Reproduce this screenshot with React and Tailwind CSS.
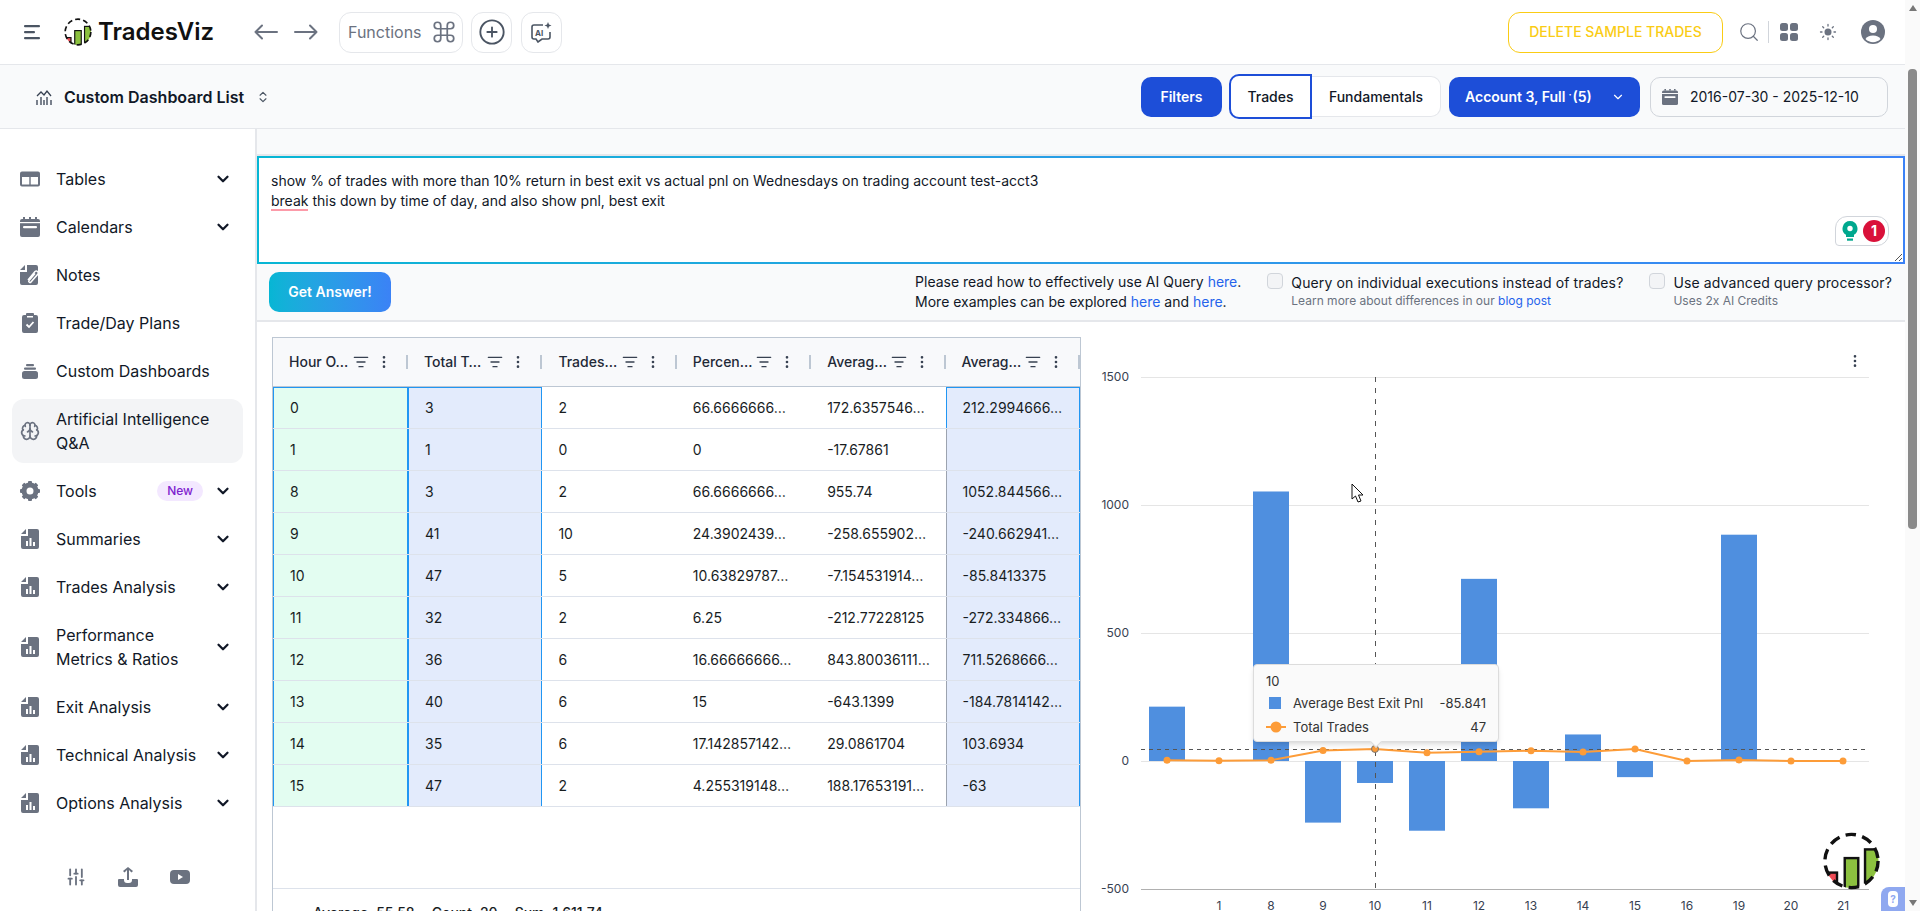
import { Brain, ChevronDown, ChevronsUpDown, CirclePlus, Command, EllipsisVertical, ListFilter, Search, SlidersVertical } from 'lucide-react';

const TableIcon = () => (
  <svg className="w-5 h-5" viewBox="0 0 20 20" fill="currentColor">
    <path d="M0 4.5A2 2 0 012 2.5h16a2 2 0 012 2v11a2 2 0 01-2 2H2a2 2 0 01-2-2z" />
    <rect x="2" y="8" width="7.3" height="7.5" fill="#fff" />
    <rect x="10.7" y="8" width="7.3" height="7.5" fill="#fff" />
  </svg>
);

const CalendarIcon = ({ className = 'w-5 h-5' }) => (
  <svg className={className} viewBox="0 0 20 20" fill="currentColor">
    <rect x="0" y="2" width="20" height="18" rx="2" />
    <rect x="3" y="0" width="2" height="2" />
    <rect x="9" y="0" width="2" height="2" />
    <rect x="15" y="0" width="2" height="2" />
    <rect x="0" y="5" width="20" height="1.2" fill="#fff" />
    <rect x="3" y="9" width="14" height="2.2" rx="1" fill="#fff" />
  </svg>
);

const NotesIcon = () => (
  <svg className="w-5 h-5" viewBox="0 0 20 20" fill="currentColor">
    <path d="M5 0v5H0zM7 0h9a2 2 0 012 2v16a2 2 0 01-2 2H2a2 2 0 01-2-2V7h7z" />
    <path d="M8 15l7-8.500a2 2 0 013 2.500l-7 8a1.200 1.200 0 01-2-1.500l6-7" fill="none" stroke="#fff" strokeWidth="1.5" />
  </svg>
);

const PlanIcon = () => (
  <svg className="w-5 h-5" viewBox="0 0 20 20" fill="currentColor">
    <path d="M4 2h2V1a1 1 0 011-1h6a1 1 0 011 1v1h2a2 2 0 012 2v14a2 2 0 01-2 2H4a2 2 0 01-2-2V4a2 2 0 012-2z" />
    <rect x="7" y="3" width="6" height="1.500" fill="#fff" />
    <path d="M6.500 11.500l2.500 2.500 4.500-5" fill="none" stroke="#fff" strokeWidth="1.800" />
  </svg>
);

const StackIcon = () => (
  <svg className="w-5 h-5" viewBox="0 0 20 20" fill="currentColor">
    <rect x="2" y="10" width="16" height="8" rx="2.500" />
    <rect x="4" y="6.500" width="12" height="2.200" rx="1" />
    <rect x="6" y="3" width="8" height="2.200" rx="1" />
  </svg>
);

const GearIcon = () => (
  <svg className="w-5 h-5" viewBox="0 0 20 20" fill="currentColor">
    {[0, 45, 90, 135, 180, 225, 270, 315].map((deg) => (
      <rect key={deg} x="8" y="0" width="4" height="4" rx="1" transform={`rotate(${deg} 10 10)`} />
    ))}
    <circle cx="10" cy="10" r="6" fill="none" stroke="currentColor" strokeWidth="5" />
  </svg>
);

const FileChartIcon = () => (
  <svg className="w-5 h-5" viewBox="0 0 20 20" fill="currentColor">
    <path d="M6 0v5H1zM8 0h9a2 2 0 012 2v16a2 2 0 01-2 2H3a2 2 0 01-2-2V7h7z" />
    <rect x="6" y="12" width="2" height="5" fill="#fff" />
    <rect x="9.500" y="9" width="2" height="8" fill="#fff" />
    <rect x="13" y="13" width="2" height="4" fill="#fff" />
  </svg>
);

const navItems = [
  { label: 'Tables', icon: <TableIcon />, arrow: true },
  { label: 'Calendars', icon: <CalendarIcon />, arrow: true },
  { label: 'Notes', icon: <NotesIcon /> },
  { label: 'Trade/Day Plans', icon: <PlanIcon /> },
  { label: 'Custom Dashboards', icon: <StackIcon /> },
  { label: 'Artificial Intelligence Q&A', icon: <Brain className="w-5 h-5" strokeWidth={2} />, active: true },
  { label: 'Tools', icon: <GearIcon />, arrow: true, badge: 'New' },
  { label: 'Summaries', icon: <FileChartIcon />, arrow: true },
  { label: 'Trades Analysis', icon: <FileChartIcon />, arrow: true },
  { label: 'Performance Metrics & Ratios', icon: <FileChartIcon />, arrow: true },
  { label: 'Exit Analysis', icon: <FileChartIcon />, arrow: true },
  { label: 'Technical Analysis', icon: <FileChartIcon />, arrow: true },
  { label: 'Options Analysis', icon: <FileChartIcon />, arrow: true },
];

const columns = ['Hour O…', 'Total T…', 'Trades…', 'Percen…', 'Averag…', 'Averag…'];

const rows = [
  ['0', '3', '2', '66.6666666…', '172.6357546…', '212.2994666…'],
  ['1', '1', '0', '0', '-17.67861', ''],
  ['8', '3', '2', '66.6666666…', '955.74', '1052.844566…'],
  ['9', '41', '10', '24.3902439…', '-258.655902…', '-240.662941…'],
  ['10', '47', '5', '10.63829787…', '-7.154531914…', '-85.8413375'],
  ['11', '32', '2', '6.25', '-212.77228125', '-272.334866…'],
  ['12', '36', '6', '16.66666666…', '843.80036111…', '711.5268666…'],
  ['13', '40', '6', '15', '-643.1399', '-184.7814142…'],
  ['14', '35', '6', '17.142857142…', '29.0861704', '103.6934'],
  ['15', '47', '2', '4.255319148…', '188.17653191…', '-63'],
];

const chartLabels = ['', '1', '8', '9', '10', '11', '12', '13', '14', '15', '16', '19', '20', '21'];
const bestExit = [212.3, 0, 1052.8, -240.66, -85.84, -272.33, 711.53, -184.78, 103.69, -63, 0, 884, 0, 0];
const totalTrades = [3, 1, 3, 41, 47, 32, 36, 40, 35, 47, 0, 4, 0, 0];

const xAt = (i) => 1167 + i * 52;
const yAt = (v) => 761 - v * 0.256;

function Logo({ id, className }) {
  return (
    <svg className={className} viewBox="0 0 60 60">
      <clipPath id={id}>
        <circle cx="30" cy="30" r="28" />
      </clipPath>
      <circle cx="30" cy="30" r="28" fill="#fff" />
      <g clipPath={`url(#${id})`} stroke="#111" strokeWidth="2.500">
        <rect x="4" y="42" width="11" height="20" fill="#ef4b55" />
        <rect x="23" y="27" width="14" height="35" fill="#8cc13f" />
        <rect x="44" y="18" width="16" height="34" fill="#8cc13f" />
      </g>
      <circle cx="30" cy="30" r="27.500" fill="none" stroke="#111" strokeWidth="3.500" strokeDasharray="11 6.500" />
    </svg>
  );
}

function NavItem({ item }) {
  return (
    <div className={`flex items-center rounded-xl pl-2 pr-[11px] text-base leading-6 text-[#111827] ${item.active ? 'bg-[#f3f4f6] py-2 my-1' : 'py-3'}`}>
      <span className="w-5 shrink-0 text-[#6b7280]">{item.icon}</span>
      <span className="ml-4 flex-1">{item.label}</span>
      {item.badge && (
        <span className="mr-[11px] rounded-full bg-[#f3e8ff] px-[10px] text-xs leading-5 font-medium text-[#7e22ce]">{item.badge}</span>
      )}
      {item.arrow && <ChevronDown className="w-[18px] h-[18px] text-[#111827] shrink-0" strokeWidth={3} />}
    </div>
  );
}

function HeaderCell({ title, first }) {
  return (
    <div className={`flex items-center h-full shrink-0 pl-4 ${first ? 'w-[135px]' : 'w-[134.4px]'}`}>
      <span className="w-[61px] whitespace-nowrap text-sm font-medium text-[#1f2937]">{title}</span>
      <ListFilter className="ml-[3px] w-4 h-4 text-[#374151] shrink-0" strokeWidth={2} />
      <EllipsisVertical className="ml-[7px] w-4 h-4 text-[#374151] shrink-0" strokeWidth={2} />
      <span className="ml-[14px] w-0.5 h-[14px] bg-[#bdc7d3] shrink-0" />
    </div>
  );
}

const cellStyles = [
  'w-[135px] bg-[#e3fdf1] border-x border-[#2196f3]',
  'w-[134.4px] bg-[#e3ebfc] border-x border-[#2196f3]',
  'w-[134.4px]',
  'w-[134.4px]',
  'w-[134.4px]',
  'w-[134.4px] bg-[#e3ebfc] border-r border-r-[#2196f3] border-l border-l-[#9ca3af]',
];

function DataTable() {
  return (
    <div className="flex flex-col shrink-0 w-[809px] h-[640px] border border-[#bdc7d3] overflow-hidden">
      <div className="flex items-center h-[49px] shrink-0 bg-[#f8f9fb] border-b border-[#bdc7d3]">
        {columns.map((c, i) => (
          <HeaderCell key={i} title={c} first={i === 0} />
        ))}
      </div>
      {rows.map((row, r) => (
        <div key={r} className="flex h-[42px] shrink-0 border-b border-[#dde2eb]">
          {row.map((val, c) => (
            <div
              key={c}
              className={`flex items-center shrink-0 pl-4 text-sm whitespace-nowrap text-[#181d1f] ${cellStyles[c]} ${r === 0 && (c < 2 || c === 5) ? 'border-t border-t-[#2196f3] border-l-[#2196f3]' : ''}`}
            >
              {val}
            </div>
          ))}
        </div>
      ))}
      <div className="h-[81px] shrink-0" />
      <div className="flex border-t border-[#dde2eb] pt-[14px] pl-10 gap-[17px] text-sm font-medium text-[#181d1f]">
        <span>Average: 55.58</span>
        <span>Count: 20</span>
        <span>Sum: 1,611.74</span>
      </div>
    </div>
  );
}

function Chart() {
  const linePoints = totalTrades.map((v, i) => `${xAt(i)},${yAt(v)}`).join(' ');
  return (
    <div className="relative flex-1 h-[589px]">
      <svg className="block" width="823" height="589" viewBox="1082 322 823 589">
        {[377, 505, 633, 761].map((y) => (
          <line key={y} x1="1141" x2="1869" y1={y + 0.5} y2={y + 0.5} stroke="#e5e5e5" />
        ))}
        <line x1="1141" x2="1869" y1="889.500" y2="889.500" stroke="#b0b0b0" />
        {[[1500, 377], [1000, 505], [500, 633], [0, 761], [-500, 889]].map(([v, y]) => (
          <text key={v} x="1129" y={y + 4} textAnchor="end" fontSize="12" fill="#374151">{v}</text>
        ))}
        {chartLabels.map((l, i) => (
          <text key={i} x={xAt(i)} y="910" textAnchor="middle" fontSize="12" fill="#374151">{l}</text>
        ))}
        {bestExit.map((v, i) =>
          v === 0 ? null : (
            <rect key={i} x={xAt(i) - 18} y={v > 0 ? yAt(v) : 761} width="36" height={Math.abs(v) * 0.256} fill="#4f8fdf" />
          )
        )}
        <line x1="1375.500" x2="1375.500" y1="377" y2="889" stroke="#555" strokeDasharray="5 6" />
        <line x1="1141" x2="1869" y1="749.500" y2="749.500" stroke="#555" strokeDasharray="4 4" />
        <polyline points={linePoints} fill="none" stroke="#fd9c38" strokeWidth="2" />
        {totalTrades.map((v, i) => (
          <circle key={i} cx={xAt(i)} cy={yAt(v)} r="3.500" fill="#fd9c38" stroke={i === 4 ? '#777' : 'none'} />
        ))}
      </svg>
      <EllipsisVertical className="absolute left-[765px] top-[31px] w-4 h-4 text-[#374151]" strokeWidth={2} />
      {/* mouse pointer caught in the screenshot */}
      <svg className="absolute left-[269px] top-[161px] w-[13px] h-[20px]" viewBox="0 0 13 20">
        <path d="M1 1v15l3.500-3 2.500 6 3-1-2.500-6H12z" fill="#fff" stroke="#111" strokeWidth="1" />
      </svg>
      {/* hover tooltip */}
      <div className="absolute left-[171px] top-[342px] w-[246px] h-[78px] rounded bg-[#fafafa] border border-[#dcdcdc] shadow-md px-3 py-[6px] text-[13px] leading-6 text-[#333]">
        <div className="leading-5">10</div>
        <div className="flex items-center">
          <span className="w-3 h-3 ml-[3px] bg-[#4f8fdf]" />
          <span className="ml-3 flex-1">Average Best Exit Pnl</span>
          <span>-85.841</span>
        </div>
        <div className="flex items-center">
          <svg className="w-5 h-3 shrink-0" viewBox="0 0 20 12">
            <line x1="0" x2="20" y1="6" y2="6" stroke="#fd9c38" strokeWidth="2" />
            <circle cx="10" cy="6" r="5.500" fill="#fd9c38" />
          </svg>
          <span className="ml-[7px] flex-1">Total Trades</span>
          <span>47</span>
        </div>
        <span className="absolute left-[118px] bottom-[-5px] w-2 h-2 rotate-45 bg-[#fafafa] border-r border-b border-[#dcdcdc]" />
      </div>
    </div>
  );
}

function TopBar() {
  return (
    <header className="flex items-center h-[65px] shrink-0 bg-white border-b border-[#e5e7eb] pl-6 pr-5">
      <svg className="w-4 h-4 text-[#4b5563]" viewBox="0 0 16 16" fill="currentColor">
        <rect x="0" y="1" width="16" height="2.200" rx="1" />
        <rect x="0" y="7" width="11" height="2.200" rx="1" />
        <rect x="0" y="13" width="16" height="2.200" rx="1" />
      </svg>
      <Logo id="logo-top" className="ml-6 w-[28px] h-[28px]" />
      <span className="ml-[6px] w-[116px] text-2xl font-semibold text-[#111]">TradesViz</span>
      <svg className="ml-10 w-6 h-4 text-[#6b7280]" viewBox="0 0 24 16" fill="none" stroke="currentColor" strokeWidth="2" strokeLinecap="round" strokeLinejoin="round">
        <path d="M23 8H1.500M8 1.500L1.500 8 8 14.500" />
      </svg>
      <svg className="ml-4 w-6 h-4 text-[#6b7280]" viewBox="0 0 24 16" fill="none" stroke="currentColor" strokeWidth="2" strokeLinecap="round" strokeLinejoin="round">
        <path d="M1 8h21.500M16 1.500L22.500 8 16 14.500" />
      </svg>
      <div className="ml-[21px] flex items-center h-[41px] w-[124px] rounded-xl border border-[#e5e7eb] pl-2 text-base text-[#6b7280]">
        Functions
        <Command className="ml-[9px] w-[26px] h-[26px]" strokeWidth={1.6} />
      </div>
      <div className="ml-2 flex items-center justify-center h-[41px] w-[41px] rounded-xl border border-[#e5e7eb] text-[#4b5563]">
        <CirclePlus className="w-7 h-7" strokeWidth={1.6} />
      </div>
      <div className="ml-[9px] flex items-center justify-center h-[41px] w-[41px] rounded-xl border border-[#e5e7eb] text-[#4b5563]">
        <svg className="w-6 h-[22px]" viewBox="2 0 22 22" fill="none" stroke="currentColor" strokeWidth="1.600">
          <path d="M14 4H5a2 2 0 00-2 2v10a2 2 0 002 2h2l2 3 4-3h6a2 2 0 002-2v-5" />
          <path d="M19 1l1 2.500 2.500 1-2.500 1-1 2.500-1-2.500-2.500-1 2.500-1z" fill="currentColor" stroke="none" />
          <text x="6" y="14.500" fontSize="8" fontWeight="700" fill="currentColor" stroke="none">AI</text>
        </svg>
      </div>
      <div className="ml-auto flex items-center justify-center w-[215px] h-[41px] rounded-xl border border-[#facc15] text-sm font-medium text-[#facc15]">
        DELETE SAMPLE TRADES
      </div>
      <Search className="ml-[15px] w-[22px] h-[22px] text-[#6b7280]" strokeWidth={1.3} />
      <span className="ml-2 w-px h-[22px] bg-[#d1d5db]" />
      <svg className="ml-[11px] w-[18px] h-[18px] text-[#6b7280]" viewBox="0 0 18 18" fill="currentColor">
        <rect x="0" y="0" width="8" height="8" rx="2.500" />
        <rect x="10" y="0" width="8" height="8" rx="2.500" />
        <rect x="0" y="10" width="8" height="8" rx="2.500" />
        <rect x="10" y="10" width="8" height="8" rx="2.500" />
      </svg>
      <svg className="ml-[21px] w-[18px] h-[18px] text-[#6b7280]" viewBox="0 0 18 18" fill="currentColor" stroke="currentColor" strokeWidth="1.300" strokeLinecap="round">
        <circle cx="9" cy="9" r="3.500" stroke="none" />
        <path d="M9 1.500v1.500M9 15v1.500M1.500 9H3M15 9h1.500M3.700 3.700l1 1M13.300 13.300l1 1M3.700 14.300l1-1M13.300 4.700l1-1" />
      </svg>
      <svg className="ml-6 w-6 h-6 text-[#6b7280]" viewBox="0 0 24 24" fill="currentColor">
        <circle cx="12" cy="12" r="12" />
        <circle cx="12" cy="9" r="4" fill="#fff" />
        <path d="M4.500 19a8 5.500 0 0115 0 10.500 10.500 0 01-15 0z" fill="#fff" />
      </svg>
    </header>
  );
}

function ToolBar() {
  return (
    <div className="flex items-center h-[64px] shrink-0 bg-[#f9fafb] border-b border-[#e5e7eb] pl-9 pr-[17px]">
      <svg className="w-4 h-4 text-[#374151]" viewBox="0 0 16 16" fill="none" stroke="currentColor" strokeWidth="1.300">
        <path d="M1 7l4-4 3 3 3-4 4 5" />
        <path d="M1 11v5M5 8v8M8 11v5M11 8v8M15 11v5" />
      </svg>
      <span className="ml-3 text-base font-semibold text-[#111827]">Custom Dashboard List</span>
      <ChevronsUpDown className="ml-3 w-[14px] h-[14px] text-[#4b5563]" strokeWidth={2} />
      <div className="ml-auto flex items-center justify-center w-[81px] h-10 rounded-[10px] bg-[#1d4ed8] text-sm font-semibold text-white">Filters</div>
      <div className="ml-[7px] flex items-center justify-center w-[83px] h-[45px] rounded-l-[10px] border-2 border-[#1d4ed8] bg-white text-sm font-medium text-[#111827]">Trades</div>
      <div className="flex items-center justify-center w-[129px] h-[41px] rounded-r-[10px] border border-l-0 border-[#e5e7eb] bg-white text-sm font-medium text-[#111827]">Fundamentals</div>
      <div className="ml-2 flex items-center w-[191px] h-10 rounded-[10px] bg-[#1d4ed8] pl-4 text-sm font-semibold text-white">
        Account 3, Full<span className="ml-[3px] mr-[1px] -translate-y-0.5 text-[10px]">·</span> (5)
        <ChevronDown className="ml-[19px] w-[14px] h-[14px]" strokeWidth={2} />
      </div>
      <div className="ml-[10px] flex items-center w-[238px] h-10 rounded-[10px] border border-[#d1d5db] bg-[#f9fafb] pl-[11px] text-sm text-[#111827]">
        <span className="text-[#6b7280]"><CalendarIcon className="w-4 h-[18px]" /></span>
        <span className="ml-3">2016-07-30 - 2025-12-10</span>
      </div>
    </div>
  );
}

function QueryBox() {
  return (
    <div className="bg-linear-to-r from-[#06b6d4] to-[#3b82f6] p-0.5 h-[108px] shrink-0">
      <div className="relative h-full bg-white px-3 py-[13px] text-sm leading-5 text-[#111827]">
        <p>show % of trades with more than 10% return in best exit vs actual pnl on Wednesdays on trading account test-acct3</p>
        <p>
          <span className="border-b-2 border-[#fb7185]/70">break</span> this down by time of day, and also show pnl, best exit
        </p>
        {/* grammar checker badge */}
        <div className="absolute right-[14px] bottom-[16px] flex items-center w-[54px] h-[30px] rounded-xl rounded-bl-sm border border-[#d1d5db] bg-white pl-[6px]">
          <svg className="w-4 h-5 shrink-0" viewBox="0 0 16 20">
            <path d="M8 0a7.500 7.500 0 00-4 13.800V16h8v-2.200A7.500 7.500 0 008 0z" fill="#00a88e" />
            <circle cx="8" cy="7.500" r="2.700" fill="#fff" />
            <rect x="5" y="17.500" width="6" height="2.200" fill="#00a88e" />
          </svg>
          <span className="ml-[5px] flex items-center justify-center w-[22px] h-[22px] shrink-0 rounded-full bg-[#d9113a] text-sm font-bold text-white">1</span>
        </div>
        <svg className="absolute right-0 bottom-0 w-[10px] h-[10px] text-[#555]" viewBox="0 0 10 10" stroke="currentColor">
          <path d="M9 2L2 9M9 6L6 9" />
        </svg>
      </div>
    </div>
  );
}

function QueryControls() {
  return (
    <div className="flex items-center h-[58px] shrink-0 bg-[#f9fafb] border-b-2 border-[#e5e7eb] pl-3 pr-[13px]">
      <div className="flex items-center justify-center w-[122px] h-10 rounded-[10px] bg-linear-to-r from-[#06b6d4] to-[#3b82f6] text-sm font-semibold text-white">Get Answer!</div>
      <div className="ml-auto text-sm leading-5 text-[#111827]">
        <p>Please read how to effectively use AI Query <span className="text-[#2563eb]">here</span>.</p>
        <p>More examples can be explored <span className="text-[#2563eb]">here</span> and <span className="text-[#2563eb]">here</span>.</p>
      </div>
      <span className="ml-[26px] self-start mt-[9px] w-4 h-4 rounded border border-[#d1d5db] bg-[#f3f4f6]" />
      <div className="ml-2 mb-0.5">
        <p className="text-sm leading-5 tracking-[0.12px] text-[#111827]">Query on individual executions instead of trades?</p>
        <p className="text-xs leading-4 text-[#6b7280]">Learn more about differences in our <span className="text-[#2563eb]">blog post</span></p>
      </div>
      <span className="ml-[26px] self-start mt-[9px] w-4 h-4 rounded border border-[#d1d5db] bg-[#f3f4f6]" />
      <div className="ml-2 mb-0.5">
        <p className="text-sm leading-5 tracking-[0.12px] text-[#111827]">Use advanced query processor?</p>
        <p className="text-xs leading-4 text-[#6b7280]">Uses 2x AI Credits</p>
      </div>
    </div>
  );
}

export default function App() {
  return (
    <div className="relative flex h-screen overflow-hidden bg-white [font-family:Inter,sans-serif]">
      <div className="flex flex-col flex-1 min-w-0">
        <TopBar />
        <ToolBar />
        <div className="flex flex-1 min-h-0">
          <aside className="flex flex-col w-[257px] shrink-0 bg-white border-r-2 border-[#e5e7eb] pl-3 pr-3 pt-[26px]">
            {navItems.map((item) => (
              <NavItem key={item.label} item={item} />
            ))}
            <div className="flex items-center mt-10 pl-[54px] gap-8 text-[#6b7280]">
              <SlidersVertical className="w-5 h-5" strokeWidth={2.2} />
              <svg className="w-5 h-5" viewBox="0 0 20 20" fill="currentColor">
                <path d="M9 3v10h2V3l2.500 2.500L15 4l-5-4-5 4 1.500 1.500z" />
                <path d="M0 13a1 1 0 011-1h5v1a3 3 0 003 3h2a3 3 0 003-3v-1h5a1 1 0 011 1v5a2 2 0 01-2 2H2a2 2 0 01-2-2z" />
              </svg>
              <svg className="w-5 h-5" viewBox="0 0 20 20" fill="currentColor">
                <rect x="0" y="3" width="20" height="14" rx="4" />
                <path d="M8 7l5 3-5 3z" fill="#fff" />
              </svg>
            </div>
          </aside>
          <main className="flex flex-col flex-1 min-w-0">
            <div className="h-[27px] shrink-0 bg-[#f9fafb] border-b-2 border-[#e5e7eb]" />
            <QueryBox />
            <QueryControls />
            <div className="flex flex-1 min-h-0 overflow-hidden">
              <div className="shrink-0 pl-[15px] pt-[15px] pr-[1px]">
                <DataTable />
              </div>
              <Chart />
            </div>
          </main>
        </div>
      </div>

      {/* page scrollbar */}
      <div className="flex flex-col items-center w-[15px] shrink-0 bg-[#fafafa]">
        <span className="mt-[5px] w-0 h-0 border-x-4 border-x-transparent border-b-[6px] border-b-[#777]" />
        <span className="mt-[58px] w-[9px] h-[460px] rounded bg-[#8a8a8a]" />
        <span className="mt-auto mb-[5px] w-0 h-0 border-x-4 border-x-transparent border-t-[6px] border-t-[#777]" />
      </div>

      <Logo id="logo-float" className="absolute left-[1822px] top-[832px] w-[59px] h-[58px]" />
      <div className="absolute left-[1881px] top-[887px] flex items-center justify-center w-6 h-6 rounded-tl-lg bg-[#8fa8f0]">
        <span className="flex items-center justify-center w-2.5 h-4 rounded-sm bg-white text-[10px] font-bold text-[#8fa8f0]">?</span>
      </div>
    </div>
  );
}
